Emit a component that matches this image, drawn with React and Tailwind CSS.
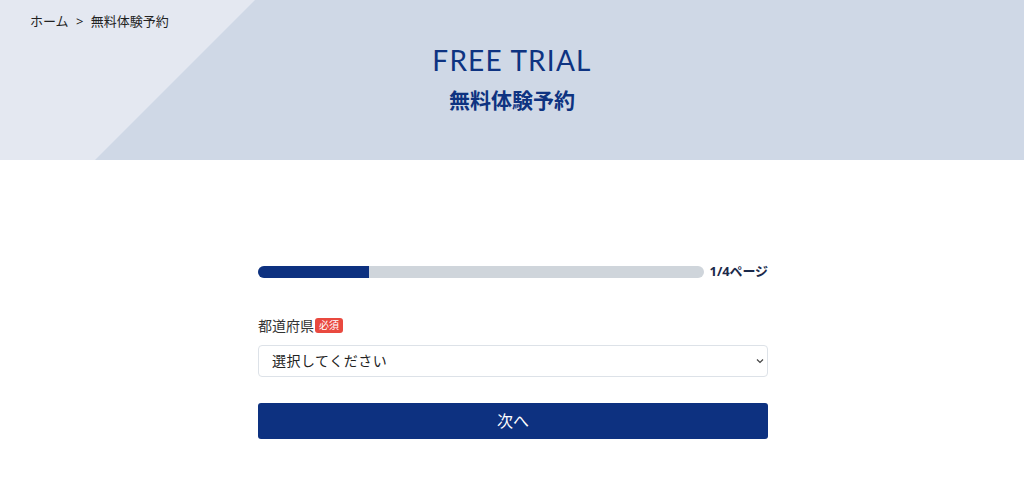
import React from 'react';

const jp = { fontFamily: '"Noto Sans", "Noto Sans CJK JP", sans-serif' };

export default function App() {
  return (
    <div className="min-h-[488px] bg-white" style={jp}>
      {/* Page header */}
      <header className="relative h-[160px] bg-[#cfd8e6] overflow-hidden">
        <div className="absolute inset-0 bg-[#e4e8f1] [clip-path:polygon(0_0,255px_0,95px_100%,0_100%)]" />
        <div className="relative">
          <nav className="pl-[30px] pt-[11px] text-[13px] leading-[20px] text-[#222]">
            ホーム <span className="mx-[4px]">&gt;</span> 無料体験予約
          </nav>
          <div className="flex flex-col items-center text-[#0e3381]">
            <h1 className="mt-[11px] text-[28px] leading-[36px] tracking-[1.2px]" style={{ fontFamily: '"Lato", "Noto Sans", sans-serif' }}>
              FREE TRIAL
            </h1>
            <p className="mt-[8px] text-[21px] leading-[28px] font-bold">無料体験予約</p>
          </div>
        </div>
      </header>

      {/* Form */}
      <main className="w-[510px] mx-auto pt-[102px] relative left-[1px]">
        <div className="flex items-center gap-[6px]">
          <div className="flex-1 h-[12px] rounded-full bg-[#cfd5db] overflow-hidden">
            <div className="h-full w-1/4 bg-[#0d3180]" />
          </div>
          <span className="text-[13px] font-bold text-[#1b2a4a] tracking-[-0.1px]">1/4ページ</span>
        </div>

        <div className="mt-[34px] flex items-center gap-[1px]">
          <label className="text-[14px] leading-[20px] text-[#333]">都道府県</label>
          <span className="rounded-[3px] bg-[#e9493f] px-[4px] text-[10px] leading-[15px] text-white">必須</span>
        </div>

        <div className="relative mt-[9px]">
          <select
            className="w-full h-[32px] appearance-none rounded-[4px] border border-[#dde2e8] bg-white pl-[13px] text-[14px] tracking-[0.5px] text-[#222]"
            style={jp}
            defaultValue=""
          >
            <option value="">選択してください</option>
          </select>
          <svg className="absolute right-[4px] top-[13px] pointer-events-none" width="8" height="6" viewBox="0 0 8 6" fill="none">
            <path d="M1 1.5 L4 4.5 L7 1.5" stroke="#444" strokeWidth="1.2" />
          </svg>
        </div>

        <button className="mt-[26px] w-full h-[36px] rounded-[3px] bg-[#0d3180] text-[16px] text-white">
          次へ
        </button>
      </main>
    </div>
  );
}
